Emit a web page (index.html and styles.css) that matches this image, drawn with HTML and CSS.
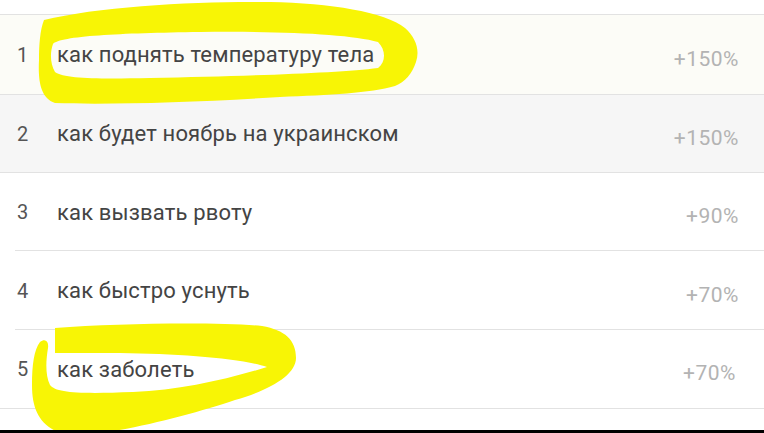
FILE: index.html
```html
<!DOCTYPE html>
<html lang="ru">
<head>
    <meta charset="UTF-8">
    <meta name="viewport" content="width=device-width, initial-scale=1.0">
    <title>Популярные запросы</title>
    <link rel="stylesheet" href="styles.css">
</head>
<body>
    <div class="screen">
        <ul class="queries">
            <li class="row first"><span class="num">1</span><span class="query">как поднять температуру тела</span><span class="growth">+150%</span></li>
            <li class="row gray"><span class="num">2</span><span class="query">как будет ноябрь на украинском</span><span class="growth">+150%</span></li>
            <li class="row inset"><span class="num">3</span><span class="query">как вызвать рвоту</span><span class="growth">+90%</span></li>
            <li class="row inset tall"><span class="num">4</span><span class="query">как быстро уснуть</span><span class="growth">+70%</span></li>
            <li class="row tall"><span class="num">5</span><span class="query">как заболеть</span><span class="growth shift">+70%</span></li>
        </ul>

        <!-- highlighter marks drawn over the list -->
        <svg class="marker" width="764" height="433" viewBox="0 0 764 433">
            <path fill="#f8f505" fill-rule="evenodd" d="M44 20 C100 6 200 1 270 2 C330 3 385 12 405 28 C416 38 420 50 416 62 C412 74 405 82 395 86 C370 93 330 95 280 97 C200 102 110 105 55 103 C40 98 38 80 39 60 C39 45 40 30 44 20 Z M53 44 C60 36 120 33 200 32 C280 31 350 34 378 42 C386 50 386 62 378 68 C340 73 250 76 150 78 C100 79 65 79 55 72 C50 64 50 52 53 44 Z"/>
            <path fill="#f8f505" d="M55 328 C120 323 220 322 262 326 C285 330 296 340 296 358 C296 375 270 390 235 400 C200 412 140 428 100 433 L60 433 C40 425 32 410 32 385 C32 365 34 350 40 342 C45 338 49 341 48 348 C46 360 45 375 50 385 C56 393 80 394 133 392 C180 390 225 380 267 367 C240 358 180 354 120 353 L55 353 Z"/>
        </svg>
    </div>
</body>
</html>
```

FILE: styles.css
```css
body {
    margin: 0;
    background: #fff;
    font-family: Roboto, "Liberation Sans", sans-serif;
}
.screen {
    position: relative;
    width: 764px;
    height: 433px;
    overflow: hidden;
    border-bottom: 3px solid #000;
    box-sizing: border-box;
}
.queries {
    list-style: none;
    margin: 14px 0 0;
    padding: 0;
    border-top: 1px solid #e2e2e2;
}
.row {
    display: flex;
    align-items: center;
    height: 78px;
    box-sizing: border-box;
    border-bottom: 1px solid #e2e2e2;
    padding-right: 25px;
}
.row.first {
    height: 80px;
    background: #fcfcf7;
}
.row.gray {
    background: #f6f6f6;
}
.row.tall {
    height: 79px;
}
.row.inset {
    border-bottom: none;
    background: linear-gradient(#e2e2e2, #e2e2e2) 15px 100% / calc(100% - 15px) 1px no-repeat;
}
.num {
    width: 57px;
    padding-left: 17px;
    box-sizing: border-box;
    font-size: 20px;
    color: #555;
}
.query {
    flex: 1;
    font-size: 22px;
    letter-spacing: 0.15px;
    color: #444;
}
.growth {
    font-size: 21px;
    color: #b3b3b3;
    letter-spacing: 0.5px;
    padding-top: 8px;
}
.growth.shift {
    margin-right: 3px;
}
.marker {
    position: absolute;
    left: 0;
    top: 0;
    pointer-events: none;
}
```
